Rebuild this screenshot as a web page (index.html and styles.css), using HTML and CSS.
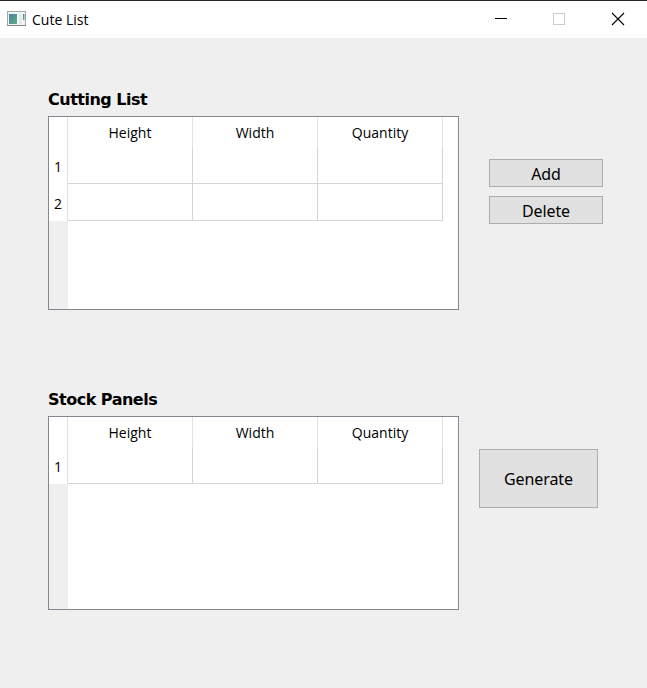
FILE: index.html
```html
<!DOCTYPE html>
<html lang="en">
<head>
<meta charset="utf-8">
<title>Cute List</title>
<link rel="stylesheet" href="styles.css">
</head>
<body>
<div class="window">
  <header class="titlebar">
    <svg class="app-icon" width="19" height="16" viewBox="0 0 19 16">
      <defs>
        <linearGradient id="pane" x1="0" y1="0" x2="1" y2="1">
          <stop offset="0" stop-color="#4a7fa8"/>
          <stop offset="1" stop-color="#5fb37c"/>
        </linearGradient>
      </defs>
      <rect x=".5" y=".5" width="18" height="14" fill="#f3f4f5" stroke="#a3a7aa"/>
      <path d="M0 14.5h19" stroke="#85898c"/>
      <rect x="2" y="3" width="8" height="10" fill="url(#pane)"/>
      <rect x="12" y="3" width="3" height="10" fill="#e6e9eb"/>
      <rect x="16" y="3" width="1.5" height="6" fill="url(#pane)"/>
    </svg>
    <span class="title">Cute List</span>
    <div class="controls">
      <svg width="58" height="37" viewBox="0 0 58 37"><path d="M22 17.5h12" stroke="#000"/></svg>
      <svg width="58" height="37" viewBox="0 0 58 37"><rect x="22.5" y="12.5" width="11" height="11" fill="none" stroke="#ccc"/></svg>
      <svg width="58" height="37" viewBox="0 0 58 37"><path d="M23 12l12 12M35 12l-12 12" stroke="#000" stroke-width="1.1"/></svg>
    </div>
  </header>
  <main class="content">
    <section class="cutting">
      <div class="list">
        <h2 class="heading">Cutting List</h2>
        <div class="table">
          <div class="row head"><span class="num"></span><span class="cell">Height</span><span class="cell">Width</span><span class="cell">Quantity</span></div>
          <div class="row"><span class="num">1</span><span class="cell"></span><span class="cell"></span><span class="cell"></span></div>
          <div class="row"><span class="num">2</span><span class="cell"></span><span class="cell"></span><span class="cell"></span></div>
          <div class="gutter"></div>
        </div>
      </div>
      <div class="actions">
        <button class="button">Add</button>
        <button class="button">Delete</button>
      </div>
    </section>
    <section class="stock">
      <div class="list">
        <h2 class="heading">Stock Panels</h2>
        <div class="table">
          <div class="row head"><span class="num"></span><span class="cell">Height</span><span class="cell">Width</span><span class="cell">Quantity</span></div>
          <div class="row"><span class="num">1</span><span class="cell"></span><span class="cell"></span><span class="cell"></span></div>
          <div class="gutter"></div>
        </div>
      </div>
      <button class="button generate">Generate</button>
    </section>
  </main>
</div>
</body>
</html>
```

FILE: styles.css
```css
* { box-sizing: border-box; }
body {
  margin: 0;
  background: #efefef;
  color: #000;
  font-family: "Open Sans", "Noto Sans", sans-serif;
  font-size: 14px;
}
.window { width: 647px; height: 688px; overflow: hidden; }
.titlebar {
  display: flex;
  height: 38px;
  border-top: 1px solid #252525;
  background: #fff;
}
.app-icon { margin: 10px 0 0 7px; }
.title {
  margin-left: 6px;
  line-height: 37px;
}
.controls { display: flex; margin-left: auto; }
.content { padding: 50px 0 0 48px; }
.cutting, .stock { display: flex; height: 300px; }
.heading {
  height: 28px;
  margin: 0;
  font-family: "DejaVu Sans", sans-serif;
  font-size: 16px;
  line-height: 23px;
  font-weight: 700;
  letter-spacing: -0.5px;
}
.table {
  display: flex;
  flex-direction: column;
  width: 411px;
  height: 194px;
  border: 1px solid #828790;
  background: #fff;
}
.row { display: flex; height: 37px; line-height: 39px; }
.num {
  width: 19px;
  border-right: 1px solid #e0e0e0;
  text-align: center;
}
.cell {
  width: 125px;
  border-right: 1px solid #d5d5d5;
  border-bottom: 1px solid #d5d5d5;
  text-align: center;
}
.head { height: 30px; line-height: 31px; }
.head .cell {
  border-right-color: #e3e3e3;
  border-bottom: 0;
}
.gutter { flex: 1; width: 19px; background: #efefef; }
.actions {
  display: flex;
  flex-direction: column;
  gap: 9px;
  margin: 71px 0 0 30px;
}
.button {
  width: 114px;
  height: 28px;
  padding: 2px 0 0;
  border: 1px solid #adadad;
  background: #e1e1e1;
  color: #000;
  font: 16px/24px "Noto Sans", sans-serif;
  letter-spacing: -0.1px;
}
.generate {
  width: 119px;
  height: 59px;
  margin: 61px 0 0 20px;
  padding: 0;
}
```
